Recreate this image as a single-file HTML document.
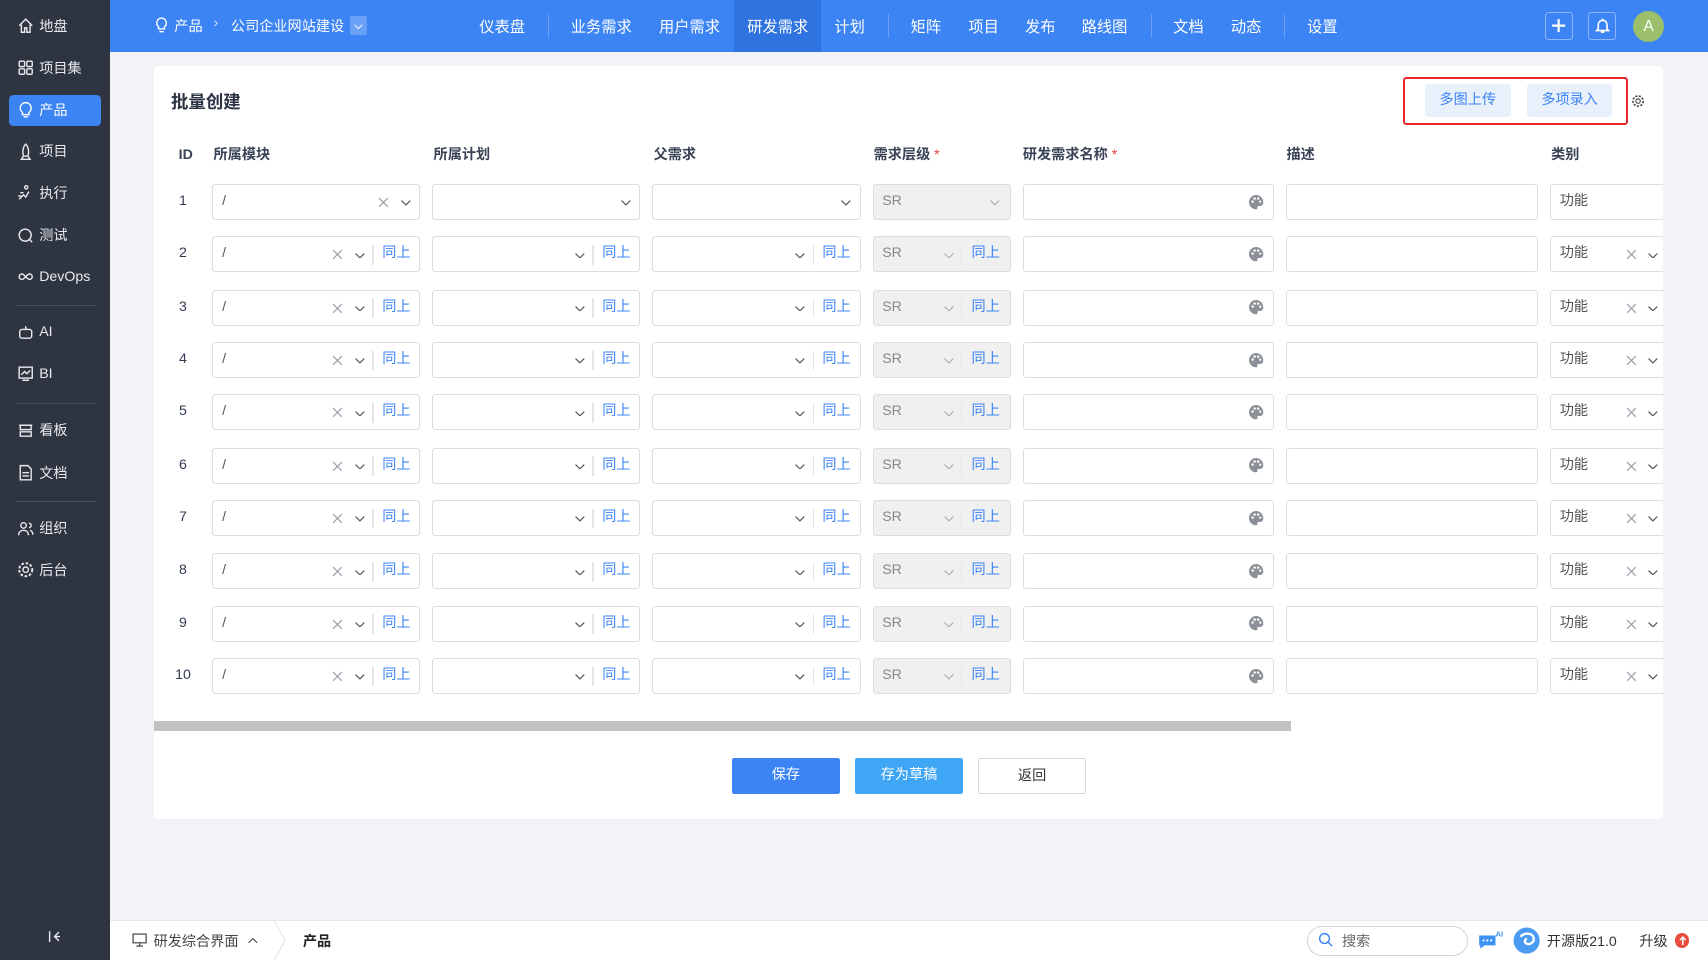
<!DOCTYPE html>
<html><head><meta charset="utf-8">
<style>
*{margin:0;padding:0;box-sizing:border-box}
html,body{width:1708px;height:960px;overflow:hidden;background:#f1f3f6}
#z{zoom:1.08929;width:1568px;height:881px;position:relative;font-family:"Liberation Sans","Noto Sans CJK SC",sans-serif;font-size:13px;color:#313c52}
.a{position:absolute}
#sb{left:0;top:0;width:101px;height:881px;background:#2e3541}
.si{position:absolute;left:16px;color:#e6e9ee;font-size:13px;display:flex;align-items:center;gap:4px;height:20px}
.si svg{width:16px;height:16px}
.dv{position:absolute;left:14px;width:75px;height:1px;background:#4a5160}
#hd{left:101px;top:0;width:1467px;height:48px;background:#3c84f4;color:#fff}
.nv{position:absolute;top:14px;font-size:14px;color:#fff}
.ns{position:absolute;top:13px;width:1px;height:22px;background:#6aa1f6}
#card{left:141px;top:61px;width:1386px;height:691px;background:#fff;border-radius:4px}
.th{position:absolute;top:134px;font-weight:bold;font-size:13px;color:#3a4356;line-height:17px}
.th b{color:#e53e3e;font-weight:normal}
.r{position:absolute;left:0;width:1568px;height:33px}
.id{position:absolute;left:160px;top:0;width:16px;text-align:center;font-size:13px;line-height:33px}
.b{position:absolute;top:0;height:33px;border:1px solid #d9dde5;border-radius:3px;background:#fff;overflow:hidden}
.g{background:#f0f0f0}
.t{position:absolute;left:8px;top:0;line-height:31px;font-size:13px;color:#555}
.x{position:absolute;top:11px;width:10px;height:10px}
.c{position:absolute;top:14px;width:9px;height:5px}
.sp{position:absolute;top:7px;width:1px;height:18px;background:#e3e5ea}
.ts{position:absolute;top:0;line-height:31px;color:#3c84f4;font-size:13px}
.pl{position:absolute;top:8px;width:15px;height:15px}
.btn{position:absolute;top:696px;width:99px;height:33px;border-radius:2px;text-align:center;line-height:33px;font-size:13px}
#ft{left:101px;top:845px;width:1467px;height:36px;background:#fff;border-top:1px solid #e6e8ec}
</style></head><body><div id="z">
<svg width="0" height="0" style="position:absolute"><defs>
<symbol id="xx" viewBox="0 0 10 10"><path d="M1 1L9 9M9 1L1 9" stroke="#9aa0a9" stroke-width="1.1"/></symbol>
<symbol id="cc" viewBox="0 0 9 5"><path d="M.5 .5L4.5 4.5L8.5 .5" stroke="#555" fill="none" stroke-width="1.1"/></symbol>
<symbol id="cg" viewBox="0 0 9 5"><path d="M.5 .5L4.5 4.5L8.5 .5" stroke="#aaa" fill="none" stroke-width="1"/></symbol>
<symbol id="pp" viewBox="0 0 16 16"><path d="M8 1a7 7 0 0 0 0 14c1.2 0 1.5-.8 1.2-1.6-.4-.9.1-1.7 1.1-1.7H12a3 3 0 0 0 3-3C15 4.1 11.9 1 8 1z" fill="#8c9099"/><circle cx="4.5" cy="7.5" r="1.2" fill="#fff"/><circle cx="6.5" cy="4.5" r="1.2" fill="#fff"/><circle cx="10" cy="4.5" r="1.2" fill="#fff"/><circle cx="12" cy="7.5" r="1.1" fill="#fff"/></symbol>
</defs></svg>

<div id="sb" class="a">
<div class="si" style="top:14px"><svg viewBox="0 0 16 16"><path d="M2 8L8 2l6 6M4 7v7h3v-4h2v4h3V7" fill="none" stroke="#e6e9ee" stroke-width="1.3"/></svg>地盘</div>
<div class="si" style="top:52px"><svg viewBox="0 0 16 16"><g fill="none" stroke="#e6e9ee" stroke-width="1.3"><rect x="2" y="2" width="5" height="5" rx="1"/><rect x="9" y="2" width="5" height="5" rx="1"/><rect x="2" y="9" width="5" height="5" rx="1"/><rect x="9" y="9" width="5" height="5" rx="1"/></g></svg>项目集</div>
<div class="a" style="left:8px;top:87px;width:85px;height:29px;background:#3c84f4;border-radius:4px"></div>
<div class="si" style="top:91px;color:#fff"><svg viewBox="0 0 16 16"><path d="M8 1.5a5 5 0 0 0-3 9v2h6v-2a5 5 0 0 0-3-9zM6 14.5h4" fill="none" stroke="#fff" stroke-width="1.3"/></svg>产品</div>
<div class="si" style="top:129px"><svg viewBox="0 0 16 16"><path d="M8 1c3 3 3 8 2 11H6C5 9 5 4 8 1zM6 12l-2 3h8l-2-3" fill="none" stroke="#e6e9ee" stroke-width="1.3"/></svg>项目</div>
<div class="si" style="top:167px"><svg viewBox="0 0 16 16"><path d="M2 14l4-4 2 2 3-5M10 3a1.5 1.5 0 1 0 0 .1M3 8h3M1 11h3" fill="none" stroke="#e6e9ee" stroke-width="1.3"/></svg>执行</div>
<div class="si" style="top:206px"><svg viewBox="0 0 16 16"><circle cx="7.5" cy="7.5" r="5.5" fill="none" stroke="#e6e9ee" stroke-width="1.3"/><path d="M11 11l3 3" stroke="#e6e9ee" stroke-width="1.3"/></svg>测试</div>
<div class="si" style="top:244px"><svg viewBox="0 0 16 16"><path d="M4.5 5.5a2.5 2.5 0 1 0 0 5c2.5 0 4.5-5 7-5a2.5 2.5 0 1 1 0 5c-2.5 0-4.5-5-7-5z" fill="none" stroke="#e6e9ee" stroke-width="1.3"/></svg>DevOps</div>
<div class="dv" style="top:280px"></div>
<div class="si" style="top:295px"><svg viewBox="0 0 16 16"><rect x="2.5" y="5" width="11" height="8" rx="2" fill="none" stroke="#e6e9ee" stroke-width="1.3"/><path d="M8 5V2" stroke="#e6e9ee" stroke-width="1.3"/></svg>AI</div>
<div class="si" style="top:333px"><svg viewBox="0 0 16 16"><rect x="2" y="2" width="12" height="10" fill="none" stroke="#e6e9ee" stroke-width="1.3"/><path d="M4 9l3-3 2 2 3-3M5 14h6" fill="none" stroke="#e6e9ee" stroke-width="1.3"/></svg>BI</div>
<div class="dv" style="top:370px"></div>
<div class="si" style="top:385px"><svg viewBox="0 0 16 16"><path d="M2 3h12M3 3v4h10V3M3 9h10v4H3z" fill="none" stroke="#e6e9ee" stroke-width="1.3"/></svg>看板</div>
<div class="si" style="top:424px"><svg viewBox="0 0 16 16"><path d="M3 1.5h7l3 3v10H3zM5 8h6M5 11h6" fill="none" stroke="#e6e9ee" stroke-width="1.3"/></svg>文档</div>
<div class="dv" style="top:460px"></div>
<div class="si" style="top:475px"><svg viewBox="0 0 16 16"><circle cx="6" cy="5" r="2.5" fill="none" stroke="#e6e9ee" stroke-width="1.3"/><path d="M1.5 14c0-3 2-4.5 4.5-4.5s4.5 1.5 4.5 4.5M11 3a2 2 0 0 1 0 4M12 9.5c1.5.5 2.5 2 2.5 4" fill="none" stroke="#e6e9ee" stroke-width="1.3"/></svg>组织</div>
<div class="si" style="top:513px"><svg viewBox="0 0 16 16"><circle cx="8" cy="8" r="2.5" fill="none" stroke="#e6e9ee" stroke-width="1.3"/><circle cx="8" cy="8" r="6" fill="none" stroke="#e6e9ee" stroke-width="1.8" stroke-dasharray="2.4 1.6"/></svg>后台</div>
<svg class="a" style="left:44px;top:854px" width="12" height="12" viewBox="0 0 12 12"><path d="M1.5 1v10M10 2L6 6l4 4M6 6h5" fill="none" stroke="#e6e9ee" stroke-width="1.3"/></svg>
</div>

<div id="hd" class="a">
<svg class="a" style="left:41px;top:16px" width="12" height="15" viewBox="0 0 12 15"><path d="M6 1a4.5 4.5 0 0 0-2.7 8v2h5.4V9A4.5 4.5 0 0 0 6 1zM4 13.5h4" fill="none" stroke="#fff" stroke-width="1.3"/></svg>
<div class="nv" style="left:59px;top:15px;font-size:13px">产品</div>
<div class="nv" style="left:95px;top:14px;font-size:13px;color:#cfe0fc">›</div>
<div class="nv" style="left:111px;top:15px;font-size:13px">公司企业网站建设</div>
<div class="a" style="left:220px;top:15px;width:16px;height:17px;background:#6aa1f6;border-radius:2px"><svg style="position:absolute;left:4px;top:7px" width="8" height="5" viewBox="0 0 9 5"><path d="M.5 .5L4.5 4.5L8.5 .5" stroke="#fff" fill="none"/></svg></div>
<div class="nv" style="left:339px">仪表盘</div><div class="ns" style="left:402px"></div>
<div class="nv" style="left:423px">业务需求</div>
<div class="nv" style="left:504px">用户需求</div>
<div class="a" style="left:573px;top:0;width:80px;height:48px;background:#2f73e0"></div>
<div class="nv" style="left:585px">研发需求</div>
<div class="nv" style="left:665px">计划</div><div class="ns" style="left:714px"></div>
<div class="nv" style="left:735px">矩阵</div>
<div class="nv" style="left:788px">项目</div>
<div class="nv" style="left:840px">发布</div>
<div class="nv" style="left:892px">路线图</div><div class="ns" style="left:956px"></div>
<div class="nv" style="left:976px">文档</div>
<div class="nv" style="left:1029px">动态</div><div class="ns" style="left:1078px"></div>
<div class="nv" style="left:1099px">设置</div>
<div class="a" style="left:1317px;top:11px;width:26px;height:26px;border:1px solid #8db5f8;border-radius:3px"><svg style="position:absolute;left:5px;top:5px" width="14" height="14"><path d="M7 1v12M1 7h12" stroke="#fff" stroke-width="2"/></svg></div>
<div class="a" style="left:1357px;top:11px;width:26px;height:26px;border:1px solid #8db5f8;border-radius:3px"><svg style="position:absolute;left:5px;top:4px" width="14" height="16" viewBox="0 0 14 16"><path d="M3 11V7a4 4 0 0 1 8 0v4l1.5 1.5h-11zM5.5 14h3M7 1.5v1" fill="none" stroke="#fff" stroke-width="1.5"/></svg></div>
<div class="a" style="left:1398px;top:10px;width:29px;height:29px;border-radius:50%;background:#9bbf6b;color:#fff;text-align:center;line-height:29px;font-size:14px">A</div>
</div>

<div id="card" class="a"></div>
<div class="a" style="left:157px;top:82px;font-size:16px;font-weight:bold;color:#2a3244">批量创建</div>
<div class="a" style="left:1288px;top:71px;width:207px;height:44px;border:2px solid #e5262a;border-radius:3px"></div>
<div class="a" style="left:1308px;top:77px;width:79px;height:30px;background:#e8f0fc;border-radius:3px;color:#3c84f4;text-align:center;line-height:30px">多图上传</div>
<div class="a" style="left:1402px;top:77px;width:78px;height:30px;background:#e8f0fc;border-radius:3px;color:#3c84f4;text-align:center;line-height:30px">多项录入</div>
<svg class="a" style="left:1497px;top:86px" width="13" height="13" viewBox="0 0 16 16"><circle cx="8" cy="8" r="2.5" fill="none" stroke="#444" stroke-width="1.3"/><circle cx="8" cy="8" r="5.8" fill="none" stroke="#444" stroke-width="1.8" stroke-dasharray="2.4 1.6"/></svg>

<div class="th" style="left:164px">ID</div>
<div class="th" style="left:196px">所属模块</div>
<div class="th" style="left:398px">所属计划</div>
<div class="th" style="left:600px">父需求</div>
<div class="th" style="left:802px">需求层级 <b>*</b></div>
<div class="th" style="left:939px">研发需求名称 <b>*</b></div>
<div class="th" style="left:1181px">描述</div>
<div class="th" style="left:1424px">类别</div>

<div class="r" style="top:169px"><div class="id">1</div>
<div class="b" style="left:195px;width:191px"><span class="t">/</span><svg class="x" style="left:151px"><use href="#xx"/></svg><svg class="c" style="left:172px"><use href="#cc"/></svg></div>
<div class="b" style="left:397px;width:191px"><svg class="c" style="left:172px"><use href="#cc"/></svg></div>
<div class="b" style="left:599px;width:191px"><svg class="c" style="left:172px"><use href="#cc"/></svg></div>
<div class="b g" style="left:801px;width:127px"><span class="t" style="color:#888">SR</span><svg class="c" style="left:107px"><use href="#cg"/></svg></div>
<div class="b" style="left:939px;width:231px"><svg class="pl" style="left:206px"><use href="#pp"/></svg></div>
<div class="b" style="left:1181px;width:231px"></div>
<div class="b" style="left:1423px;width:110px"><span class="t">功能</span></div>
</div>

<div class="r" style="top:217px"><div class="id">2</div>
<div class="b" style="left:195px;width:191px"><span class="t">/</span><svg class="x" style="left:109px"><use href="#xx"/></svg><svg class="c" style="left:130px"><use href="#cc"/></svg><i class="sp" style="left:146px"></i><span class="ts" style="left:155px">同上</span></div>
<div class="b" style="left:397px;width:191px"><svg class="c" style="left:130px"><use href="#cc"/></svg><i class="sp" style="left:146px"></i><span class="ts" style="left:155px">同上</span></div>
<div class="b" style="left:599px;width:191px"><svg class="c" style="left:130px"><use href="#cc"/></svg><i class="sp" style="left:146px"></i><span class="ts" style="left:155px">同上</span></div>
<div class="b g" style="left:801px;width:127px"><span class="t" style="color:#888">SR</span><svg class="c" style="left:65px"><use href="#cg"/></svg><i class="sp" style="left:80px"></i><span class="ts" style="left:90px">同上</span></div>
<div class="b" style="left:939px;width:231px"><svg class="pl" style="left:206px"><use href="#pp"/></svg></div>
<div class="b" style="left:1181px;width:231px"></div>
<div class="b" style="left:1423px;width:110px"><span class="t">功能</span><svg class="x" style="left:69px"><use href="#xx"/></svg><svg class="c" style="left:89px"><use href="#cc"/></svg></div>
</div>

<div class="r" style="top:266px"><div class="id">3</div>
<div class="b" style="left:195px;width:191px"><span class="t">/</span><svg class="x" style="left:109px"><use href="#xx"/></svg><svg class="c" style="left:130px"><use href="#cc"/></svg><i class="sp" style="left:146px"></i><span class="ts" style="left:155px">同上</span></div>
<div class="b" style="left:397px;width:191px"><svg class="c" style="left:130px"><use href="#cc"/></svg><i class="sp" style="left:146px"></i><span class="ts" style="left:155px">同上</span></div>
<div class="b" style="left:599px;width:191px"><svg class="c" style="left:130px"><use href="#cc"/></svg><i class="sp" style="left:146px"></i><span class="ts" style="left:155px">同上</span></div>
<div class="b g" style="left:801px;width:127px"><span class="t" style="color:#888">SR</span><svg class="c" style="left:65px"><use href="#cg"/></svg><i class="sp" style="left:80px"></i><span class="ts" style="left:90px">同上</span></div>
<div class="b" style="left:939px;width:231px"><svg class="pl" style="left:206px"><use href="#pp"/></svg></div>
<div class="b" style="left:1181px;width:231px"></div>
<div class="b" style="left:1423px;width:110px"><span class="t">功能</span><svg class="x" style="left:69px"><use href="#xx"/></svg><svg class="c" style="left:89px"><use href="#cc"/></svg></div>
</div>

<div class="r" style="top:314px"><div class="id">4</div>
<div class="b" style="left:195px;width:191px"><span class="t">/</span><svg class="x" style="left:109px"><use href="#xx"/></svg><svg class="c" style="left:130px"><use href="#cc"/></svg><i class="sp" style="left:146px"></i><span class="ts" style="left:155px">同上</span></div>
<div class="b" style="left:397px;width:191px"><svg class="c" style="left:130px"><use href="#cc"/></svg><i class="sp" style="left:146px"></i><span class="ts" style="left:155px">同上</span></div>
<div class="b" style="left:599px;width:191px"><svg class="c" style="left:130px"><use href="#cc"/></svg><i class="sp" style="left:146px"></i><span class="ts" style="left:155px">同上</span></div>
<div class="b g" style="left:801px;width:127px"><span class="t" style="color:#888">SR</span><svg class="c" style="left:65px"><use href="#cg"/></svg><i class="sp" style="left:80px"></i><span class="ts" style="left:90px">同上</span></div>
<div class="b" style="left:939px;width:231px"><svg class="pl" style="left:206px"><use href="#pp"/></svg></div>
<div class="b" style="left:1181px;width:231px"></div>
<div class="b" style="left:1423px;width:110px"><span class="t">功能</span><svg class="x" style="left:69px"><use href="#xx"/></svg><svg class="c" style="left:89px"><use href="#cc"/></svg></div>
</div>

<div class="r" style="top:362px"><div class="id">5</div>
<div class="b" style="left:195px;width:191px"><span class="t">/</span><svg class="x" style="left:109px"><use href="#xx"/></svg><svg class="c" style="left:130px"><use href="#cc"/></svg><i class="sp" style="left:146px"></i><span class="ts" style="left:155px">同上</span></div>
<div class="b" style="left:397px;width:191px"><svg class="c" style="left:130px"><use href="#cc"/></svg><i class="sp" style="left:146px"></i><span class="ts" style="left:155px">同上</span></div>
<div class="b" style="left:599px;width:191px"><svg class="c" style="left:130px"><use href="#cc"/></svg><i class="sp" style="left:146px"></i><span class="ts" style="left:155px">同上</span></div>
<div class="b g" style="left:801px;width:127px"><span class="t" style="color:#888">SR</span><svg class="c" style="left:65px"><use href="#cg"/></svg><i class="sp" style="left:80px"></i><span class="ts" style="left:90px">同上</span></div>
<div class="b" style="left:939px;width:231px"><svg class="pl" style="left:206px"><use href="#pp"/></svg></div>
<div class="b" style="left:1181px;width:231px"></div>
<div class="b" style="left:1423px;width:110px"><span class="t">功能</span><svg class="x" style="left:69px"><use href="#xx"/></svg><svg class="c" style="left:89px"><use href="#cc"/></svg></div>
</div>

<div class="r" style="top:411px"><div class="id">6</div>
<div class="b" style="left:195px;width:191px"><span class="t">/</span><svg class="x" style="left:109px"><use href="#xx"/></svg><svg class="c" style="left:130px"><use href="#cc"/></svg><i class="sp" style="left:146px"></i><span class="ts" style="left:155px">同上</span></div>
<div class="b" style="left:397px;width:191px"><svg class="c" style="left:130px"><use href="#cc"/></svg><i class="sp" style="left:146px"></i><span class="ts" style="left:155px">同上</span></div>
<div class="b" style="left:599px;width:191px"><svg class="c" style="left:130px"><use href="#cc"/></svg><i class="sp" style="left:146px"></i><span class="ts" style="left:155px">同上</span></div>
<div class="b g" style="left:801px;width:127px"><span class="t" style="color:#888">SR</span><svg class="c" style="left:65px"><use href="#cg"/></svg><i class="sp" style="left:80px"></i><span class="ts" style="left:90px">同上</span></div>
<div class="b" style="left:939px;width:231px"><svg class="pl" style="left:206px"><use href="#pp"/></svg></div>
<div class="b" style="left:1181px;width:231px"></div>
<div class="b" style="left:1423px;width:110px"><span class="t">功能</span><svg class="x" style="left:69px"><use href="#xx"/></svg><svg class="c" style="left:89px"><use href="#cc"/></svg></div>
</div>

<div class="r" style="top:459px"><div class="id">7</div>
<div class="b" style="left:195px;width:191px"><span class="t">/</span><svg class="x" style="left:109px"><use href="#xx"/></svg><svg class="c" style="left:130px"><use href="#cc"/></svg><i class="sp" style="left:146px"></i><span class="ts" style="left:155px">同上</span></div>
<div class="b" style="left:397px;width:191px"><svg class="c" style="left:130px"><use href="#cc"/></svg><i class="sp" style="left:146px"></i><span class="ts" style="left:155px">同上</span></div>
<div class="b" style="left:599px;width:191px"><svg class="c" style="left:130px"><use href="#cc"/></svg><i class="sp" style="left:146px"></i><span class="ts" style="left:155px">同上</span></div>
<div class="b g" style="left:801px;width:127px"><span class="t" style="color:#888">SR</span><svg class="c" style="left:65px"><use href="#cg"/></svg><i class="sp" style="left:80px"></i><span class="ts" style="left:90px">同上</span></div>
<div class="b" style="left:939px;width:231px"><svg class="pl" style="left:206px"><use href="#pp"/></svg></div>
<div class="b" style="left:1181px;width:231px"></div>
<div class="b" style="left:1423px;width:110px"><span class="t">功能</span><svg class="x" style="left:69px"><use href="#xx"/></svg><svg class="c" style="left:89px"><use href="#cc"/></svg></div>
</div>

<div class="r" style="top:508px"><div class="id">8</div>
<div class="b" style="left:195px;width:191px"><span class="t">/</span><svg class="x" style="left:109px"><use href="#xx"/></svg><svg class="c" style="left:130px"><use href="#cc"/></svg><i class="sp" style="left:146px"></i><span class="ts" style="left:155px">同上</span></div>
<div class="b" style="left:397px;width:191px"><svg class="c" style="left:130px"><use href="#cc"/></svg><i class="sp" style="left:146px"></i><span class="ts" style="left:155px">同上</span></div>
<div class="b" style="left:599px;width:191px"><svg class="c" style="left:130px"><use href="#cc"/></svg><i class="sp" style="left:146px"></i><span class="ts" style="left:155px">同上</span></div>
<div class="b g" style="left:801px;width:127px"><span class="t" style="color:#888">SR</span><svg class="c" style="left:65px"><use href="#cg"/></svg><i class="sp" style="left:80px"></i><span class="ts" style="left:90px">同上</span></div>
<div class="b" style="left:939px;width:231px"><svg class="pl" style="left:206px"><use href="#pp"/></svg></div>
<div class="b" style="left:1181px;width:231px"></div>
<div class="b" style="left:1423px;width:110px"><span class="t">功能</span><svg class="x" style="left:69px"><use href="#xx"/></svg><svg class="c" style="left:89px"><use href="#cc"/></svg></div>
</div>

<div class="r" style="top:556px"><div class="id">9</div>
<div class="b" style="left:195px;width:191px"><span class="t">/</span><svg class="x" style="left:109px"><use href="#xx"/></svg><svg class="c" style="left:130px"><use href="#cc"/></svg><i class="sp" style="left:146px"></i><span class="ts" style="left:155px">同上</span></div>
<div class="b" style="left:397px;width:191px"><svg class="c" style="left:130px"><use href="#cc"/></svg><i class="sp" style="left:146px"></i><span class="ts" style="left:155px">同上</span></div>
<div class="b" style="left:599px;width:191px"><svg class="c" style="left:130px"><use href="#cc"/></svg><i class="sp" style="left:146px"></i><span class="ts" style="left:155px">同上</span></div>
<div class="b g" style="left:801px;width:127px"><span class="t" style="color:#888">SR</span><svg class="c" style="left:65px"><use href="#cg"/></svg><i class="sp" style="left:80px"></i><span class="ts" style="left:90px">同上</span></div>
<div class="b" style="left:939px;width:231px"><svg class="pl" style="left:206px"><use href="#pp"/></svg></div>
<div class="b" style="left:1181px;width:231px"></div>
<div class="b" style="left:1423px;width:110px"><span class="t">功能</span><svg class="x" style="left:69px"><use href="#xx"/></svg><svg class="c" style="left:89px"><use href="#cc"/></svg></div>
</div>

<div class="r" style="top:604px"><div class="id" style="left:157px;width:22px">10</div>
<div class="b" style="left:195px;width:191px"><span class="t">/</span><svg class="x" style="left:109px"><use href="#xx"/></svg><svg class="c" style="left:130px"><use href="#cc"/></svg><i class="sp" style="left:146px"></i><span class="ts" style="left:155px">同上</span></div>
<div class="b" style="left:397px;width:191px"><svg class="c" style="left:130px"><use href="#cc"/></svg><i class="sp" style="left:146px"></i><span class="ts" style="left:155px">同上</span></div>
<div class="b" style="left:599px;width:191px"><svg class="c" style="left:130px"><use href="#cc"/></svg><i class="sp" style="left:146px"></i><span class="ts" style="left:155px">同上</span></div>
<div class="b g" style="left:801px;width:127px"><span class="t" style="color:#888">SR</span><svg class="c" style="left:65px"><use href="#cg"/></svg><i class="sp" style="left:80px"></i><span class="ts" style="left:90px">同上</span></div>
<div class="b" style="left:939px;width:231px"><svg class="pl" style="left:206px"><use href="#pp"/></svg></div>
<div class="b" style="left:1181px;width:231px"></div>
<div class="b" style="left:1423px;width:110px"><span class="t">功能</span><svg class="x" style="left:69px"><use href="#xx"/></svg><svg class="c" style="left:89px"><use href="#cc"/></svg></div>
</div>

<div class="a" style="left:1527px;top:61px;width:41px;height:691px;background:#f1f3f6"></div>
<div class="a" style="left:141px;top:662px;width:1044px;height:9px;background:#c2c2c2"></div>

<div class="btn" style="left:672px;background:#3c84f4;color:#fff">保存</div>
<div class="btn" style="left:785px;background:#3fa6f5;color:#fff">存为草稿</div>
<div class="btn" style="left:898px;background:#fff;border:1px solid #d4d8df;color:#333">返回</div>

<div id="ft" class="a">
<svg class="a" style="left:20px;top:11px" width="14" height="13" viewBox="0 0 14 13"><rect x="1" y="1" width="12" height="8" fill="none" stroke="#555" stroke-width="1.2"/><path d="M7 9v3M4 12h6" stroke="#555" stroke-width="1.2"/></svg>
<div class="a" style="left:40px;top:9px;color:#444">研发综合界面</div>
<svg class="a" style="left:127px;top:15px" width="9" height="5" viewBox="0 0 9 5"><path d="M.5 4.5L4.5 .5L8.5 4.5" stroke="#555" fill="none" stroke-width="1.1"/></svg>
<svg class="a" style="left:150px;top:0" width="12" height="36"><path d="M1 0l10 18L1 36" stroke="#e3e5ea" fill="none"/></svg>
<div class="a" style="left:177px;top:9px;color:#222;font-weight:bold">产品</div>
<div class="a" style="left:1099px;top:4px;width:148px;height:28px;border:1px solid #cfd4dc;border-radius:14px"></div>
<svg class="a" style="left:1109px;top:10px" width="14" height="14" viewBox="0 0 14 14"><circle cx="6" cy="6" r="4.5" fill="none" stroke="#3c84f4" stroke-width="1.3"/><path d="M9.5 9.5L13 13" stroke="#3c84f4" stroke-width="1.3"/></svg>
<div class="a" style="left:1131px;top:9px;color:#666">搜索</div>
<svg class="a" style="left:1255px;top:7px" width="25" height="20" viewBox="0 0 25 20"><path d="M2 6h15v9H7l-4 3v-3H2z" fill="#3c92f4"/><circle cx="6" cy="10.5" r="1" fill="#fff"/><circle cx="9.5" cy="10.5" r="1" fill="#fff"/><circle cx="13" cy="10.5" r="1" fill="#fff"/><text x="17" y="7" font-size="7" font-weight="bold" fill="#3c92f4" font-family="Liberation Sans">AI</text></svg>
<svg class="a" style="left:1288px;top:5px" width="25" height="25" viewBox="0 0 25 25"><circle cx="12.5" cy="12.5" r="12" fill="#4a9bf2"/><path d="M7 9c3-4 11-4 12 1 1 4-4 7-7 5-2-1-1-4 1-4" fill="none" stroke="#fff" stroke-width="2.2"/></svg>
<div class="a" style="left:1319px;top:9px;color:#333">开源版21.0</div>
<div class="a" style="left:1404px;top:9px;color:#333">升级</div>
<div class="a" style="left:1437px;top:11px;width:13px;height:13px;border-radius:50%;background:#e84c3d"><svg style="position:absolute;left:3px;top:2px" width="7" height="9" viewBox="0 0 7 9"><path d="M3.5 8.5V1M.8 3.8L3.5 1l2.7 2.8" stroke="#fff" fill="none" stroke-width="1.4"/></svg></div>
</div>
</div></body></html>
